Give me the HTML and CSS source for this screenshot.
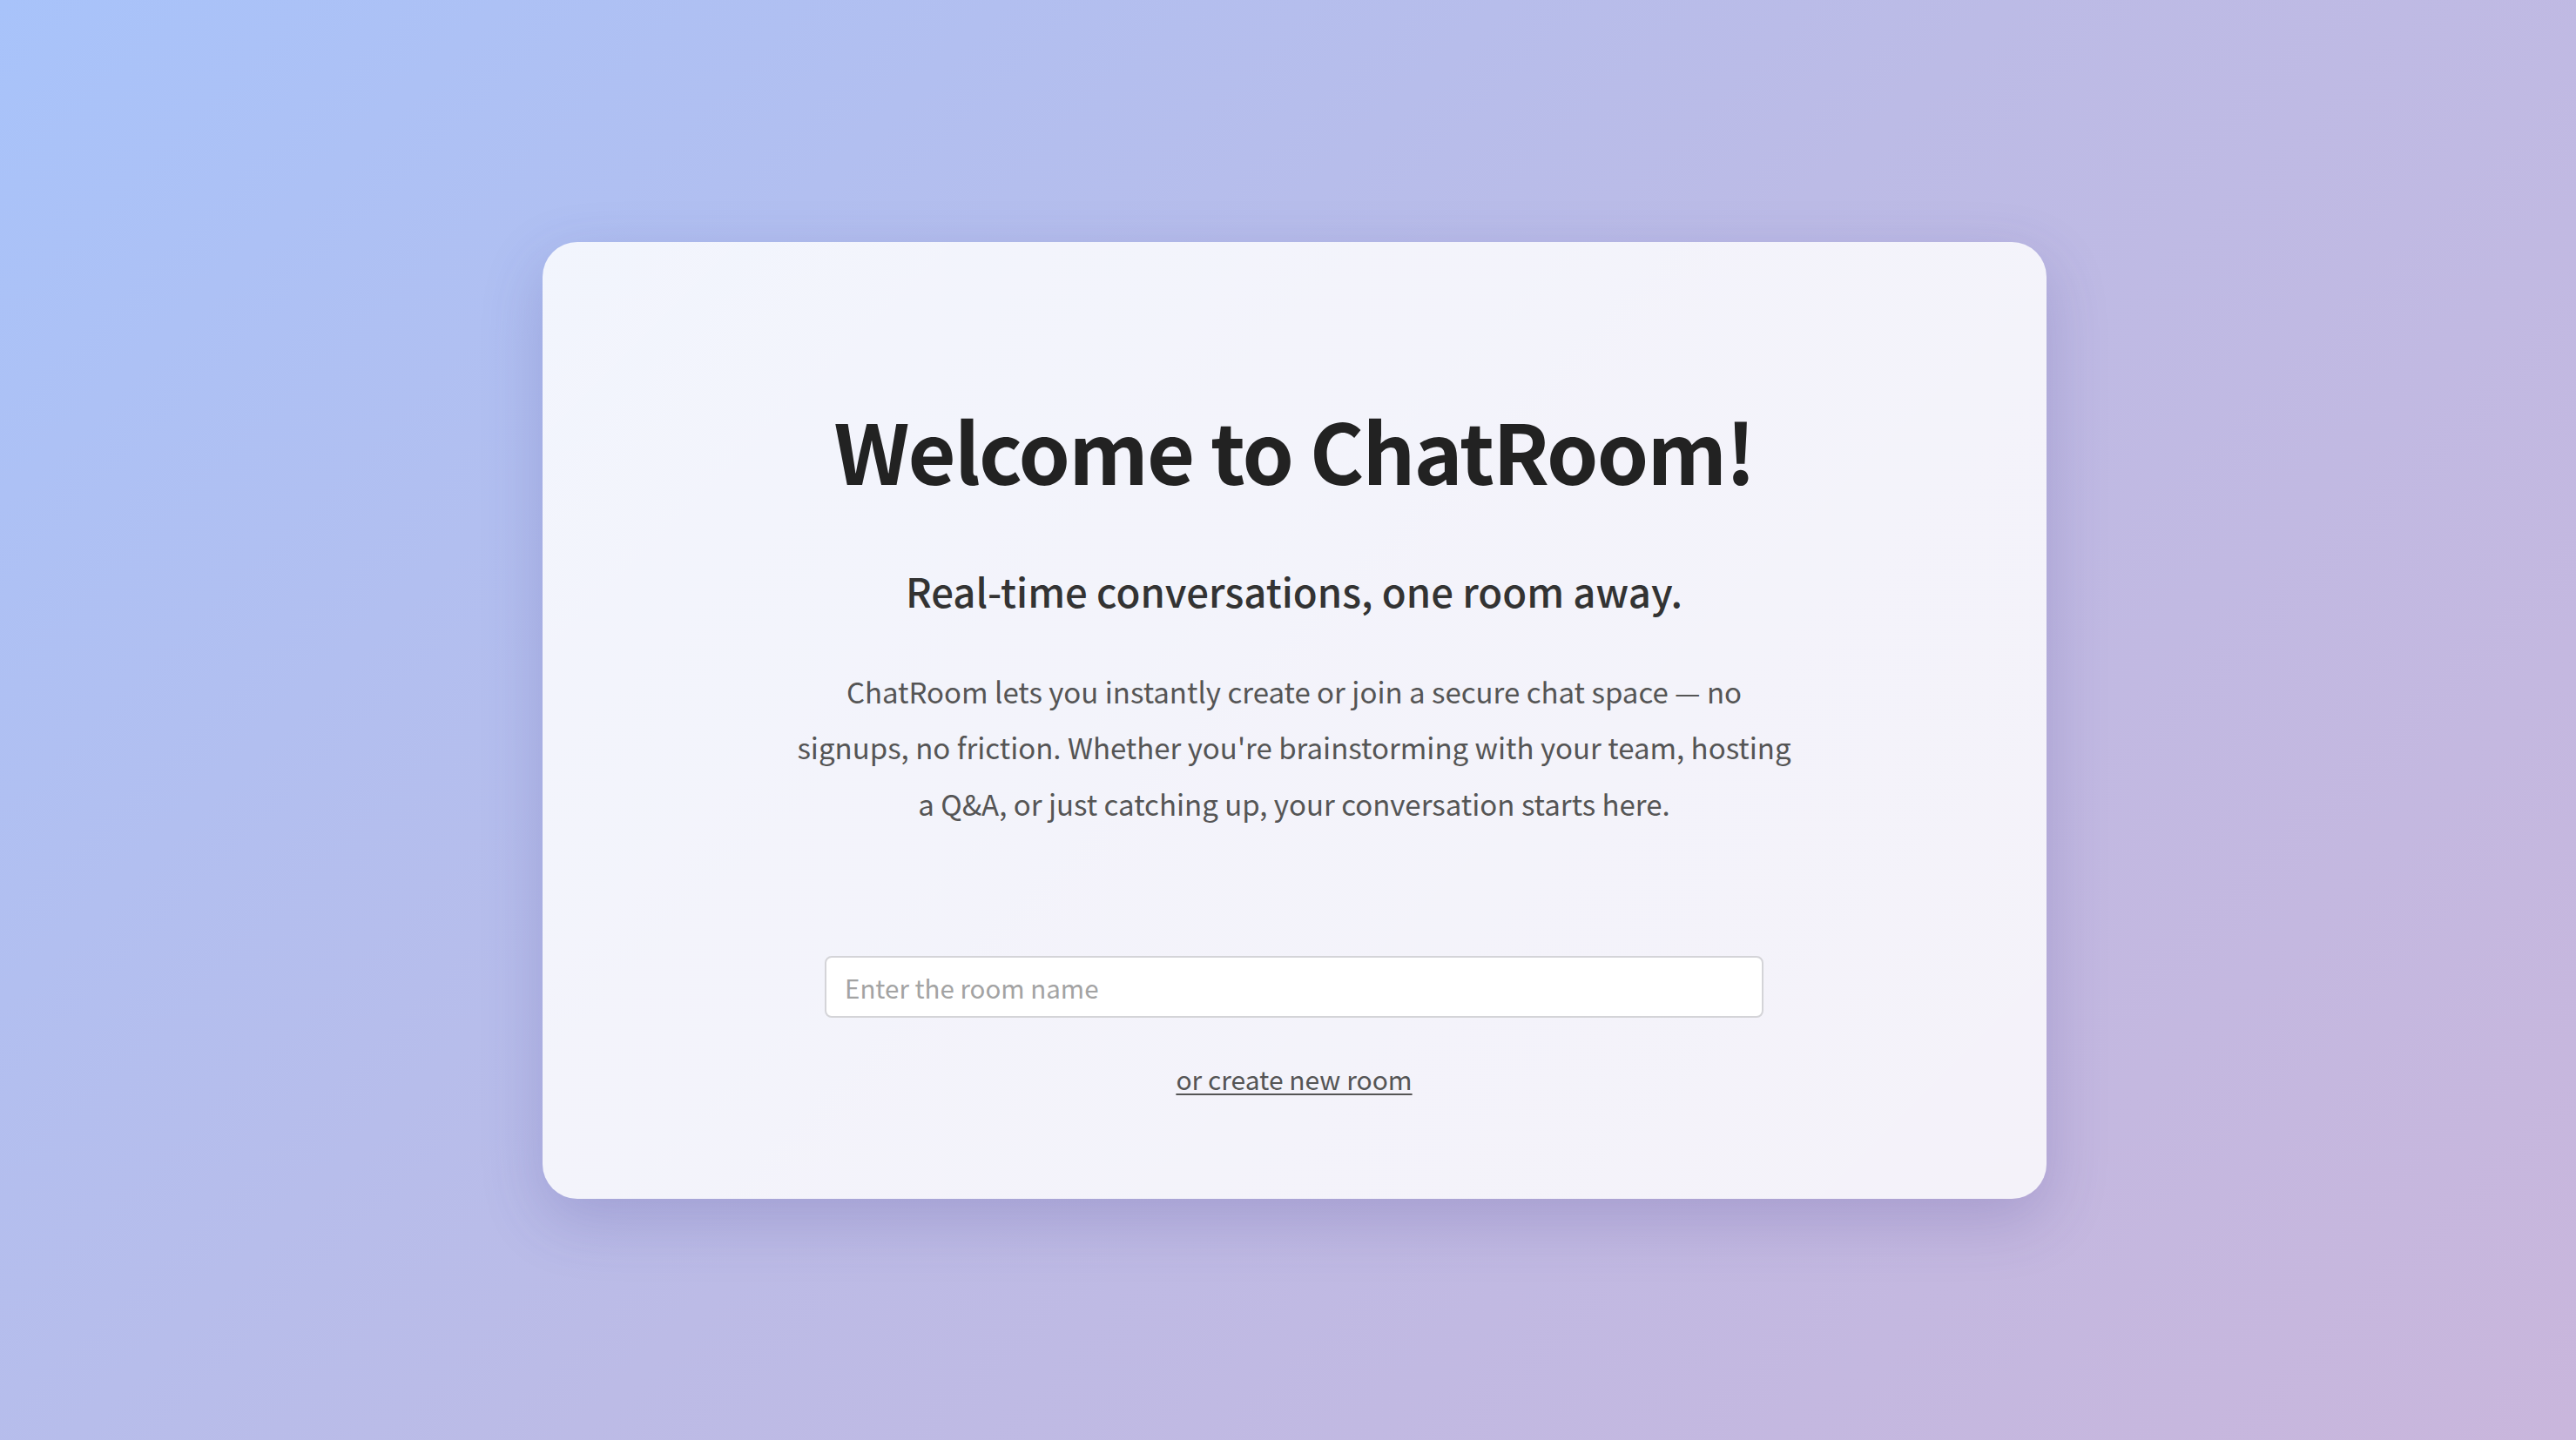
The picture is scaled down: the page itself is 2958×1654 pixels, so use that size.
FILE: index.html
```html
<!DOCTYPE html>
<html lang="en">
<head>
<meta charset="utf-8">
<title>ChatRoom</title>
<link rel="stylesheet" href="styles.css">
</head>
<body>
  <main class="card">
    <h1 class="title">Welcome to ChatRoom!</h1>
    <h2 class="subtitle">Real-time conversations, one room away.</h2>
    <p class="lead">ChatRoom lets you instantly create or join a secure chat space — no signups, no friction. Whether you're brainstorming with your team, hosting a Q&amp;A, or just catching up, your conversation starts here.</p>
    <input class="room-input" type="text" placeholder="Enter the room name">
    <a class="create-link" href="#">or create new room</a>
  </main>
</body>
</html>
```

FILE: styles.css
```css
html, body {
  margin: 0;
  height: 100%;
}

body {
  min-height: 100vh;
  box-sizing: border-box;
  padding-left: 14px;
  display: flex;
  align-items: center;
  justify-content: center;
  background: linear-gradient(135deg, #a8c3fa 0%, #bcbbe6 50%, #c9b6dc 100%);
  font-family: "Noto Sans CJK KR", "Noto Sans", sans-serif;
}

.card {
  width: 1727px;
  height: 1099px;
  box-sizing: border-box;
  padding: 180px 0 0;
  border-radius: 40px;
  background: linear-gradient(135deg, rgba(255,255,255,0.84), rgba(255,255,255,0.82));
  box-shadow: 0 24px 70px rgba(70, 60, 140, 0.22);
  display: flex;
  flex-direction: column;
  align-items: center;
  text-align: center;
}

.title {
  margin: 0;
  font-size: 95px;
  line-height: 115px;
  font-weight: 700;
  letter-spacing: -1.8px;
  color: #222;
}

.subtitle {
  margin: 78px 0 0;
  font-size: 45.5px;
  line-height: 55px;
  font-weight: 500;
  color: #333;
}

.lead {
  margin: 56px 0 0;
  max-width: 1150px;
  font-size: 33px;
  line-height: 64.5px;
  color: #555;
}

.room-input {
  margin-top: 143px;
  width: 1078px;
  height: 71px;
  box-sizing: border-box;
  padding: 0 21px;
  border: 2px solid #d4d4d8;
  border-radius: 8px;
  background: #fff;
  font-family: inherit;
  font-size: 29.5px;
  color: #333;
  outline: none;
}

.room-input::placeholder {
  color: #a3a3a3;
}

.create-link {
  margin-top: 50px;
  font-size: 30px;
  line-height: 41px;
  color: #555;
  text-decoration: underline;
  text-decoration-thickness: 2px;
  text-underline-offset: 4px;
}
```
